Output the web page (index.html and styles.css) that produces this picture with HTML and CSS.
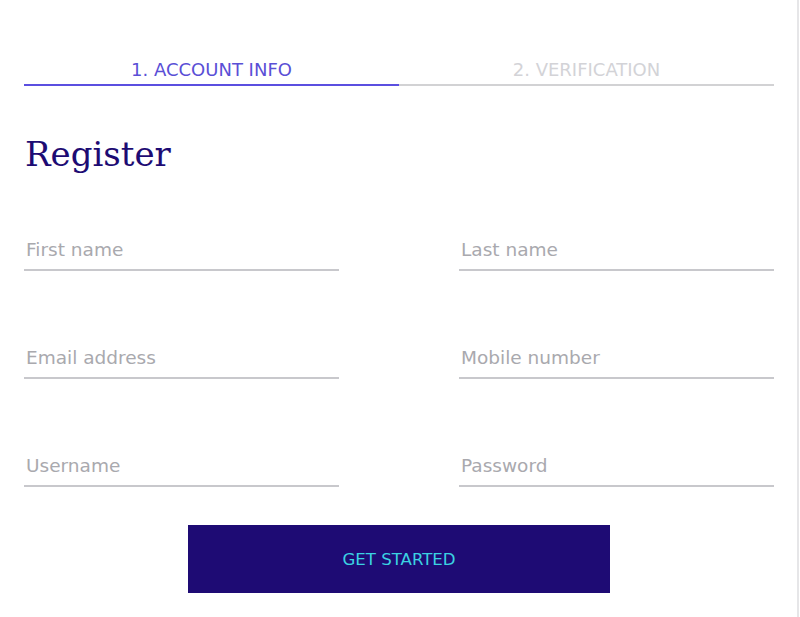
FILE: index.html
```html
<!DOCTYPE html>
<html lang="en">
<head>
<meta charset="utf-8">
<title>Register</title>
<link rel="stylesheet" href="styles.css">
</head>
<body>
<div class="frame">
  <div class="form">
    <div class="tabs">
      <div class="tab tab-active">1. ACCOUNT INFO</div>
      <div class="tab">2. VERIFICATION</div>
    </div>
    <h1 class="title">Register</h1>
    <div class="fields">
      <div class="field"><span class="label">First name</span></div>
      <div class="field"><span class="label">Last name</span></div>
      <div class="field"><span class="label">Email address</span></div>
      <div class="field"><span class="label">Mobile number</span></div>
      <div class="field"><span class="label">Username</span></div>
      <div class="field"><span class="label">Password</span></div>
    </div>
    <div class="actions">
      <button class="btn" type="button">GET STARTED</button>
    </div>
  </div>
</div>
</body>
</html>
```
FILE: styles.css
```css
html, body {
  margin: 0;
  padding: 0;
  background: #ffffff;
}
.frame {
  box-sizing: border-box;
  width: 799px;
  min-height: 617px;
  border-right: 2px solid #e6e6e8;
}
.form {
  width: 750px;
  margin-left: 24px;
  padding-top: 60px;
  font-family: "DejaVu Sans", sans-serif;
}
.tabs {
  display: flex;
}
.tab {
  flex: 1;
  text-align: center;
  font-size: 18px;
  line-height: 20px;
  padding-bottom: 4px;
  color: #d3d3d7;
  border-bottom: 2px solid #d2d2d4;
}
.tab-active {
  color: #5a4fd6;
  border-bottom-color: #5b4fe0;
}
.title {
  margin: 48px 0 0 1px;
  font-family: "DejaVu Serif", serif;
  font-weight: normal;
  font-size: 34px;
  line-height: 40px;
  color: #1d0b73;
}
.fields {
  margin-top: 65px;
  display: grid;
  grid-template-columns: 315px 315px;
  column-gap: 120px;
  row-gap: 76px;
}
.field {
  padding: 0 0 8px 2px;
  border-bottom: 2px solid #c8c8cc;
}
.label {
  display: block;
  font-size: 18.5px;
  line-height: 22px;
  color: #a9a9ae;
}
.actions {
  margin-top: 38px;
  display: flex;
  justify-content: center;
}
.btn {
  width: 422px;
  height: 68px;
  border: 0;
  padding: 0;
  background: #1e0b74;
  color: #3bd2e2;
  font-family: "DejaVu Sans", sans-serif;
  font-size: 16.6px;
}
```
